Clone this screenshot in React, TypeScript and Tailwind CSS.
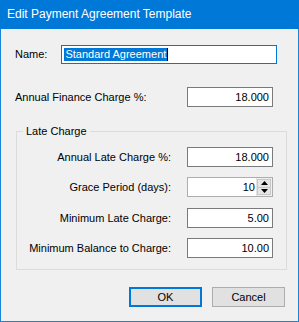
import { ReactNode } from 'react'

// Edit Payment Agreement Template — WinForms style dialog

function Field({ value, className = '' }: { value: string; className?: string }) {
  return (
    <div className={`h-[20px] w-[86px] bg-white border border-[#7a7a7a] flex items-center justify-end pr-[3px] ${className}`}>
      <span>{value}</span>
    </div>
  )
}

function Spinner({ value }: { value: string }) {
  return (
    <div className="h-[20px] w-[86px] bg-white border border-[#adadad] flex items-stretch">
      <div className="flex-1 flex items-center justify-end pr-[1px]">{value}</div>
      <div className="w-[16px] flex flex-col bg-[#f0f0f0] border-l border-[#e3e3e3] py-[1px] pr-[1px]">
        <div className="flex-1 flex items-center justify-center bg-[#e6e6e6] border border-[#c8c8c8]">
          <svg width="7" height="4" viewBox="0 0 7 4"><path d="M3.5 0 L7 4 L0 4 Z" fill="#000" /></svg>
        </div>
        <div className="flex-1 flex items-center justify-center bg-[#e6e6e6] border border-t-0 border-[#c8c8c8]">
          <svg width="7" height="4" viewBox="0 0 7 4"><path d="M0 0 L7 0 L3.5 4 Z" fill="#000" /></svg>
        </div>
      </div>
    </div>
  )
}

function Row({ label, children, className = '' }: { label: string; children: ReactNode; className?: string }) {
  return (
    <div className={`flex items-center ${className}`}>
      <span className="w-[155px] text-right pr-[1px]">{label}</span>
      <div className="ml-[15px]">{children}</div>
    </div>
  )
}

export default function App() {
  return (
    <div
      className="w-[299px] h-[322px] bg-[#f0f0f0] border-x border-b border-[#1883d7] text-[11px] leading-[13px] text-black flex flex-col"
      style={{ fontFamily: '"Liberation Sans", Arial, sans-serif' }}
    >
      <div className="h-[29px] -mx-px bg-[#0078d7] text-white text-[12px] flex items-center pl-[7px] shrink-0">
        Edit Payment Agreement Template
      </div>

      <div className="pl-[14px] pt-[16px]">
        <div className="flex items-center">
          <span>Name:</span>
          <div className="ml-[14px] h-[19px] w-[216px] bg-white border border-[#0078d7] flex items-center pl-[2px]">
            <span className="bg-[#0078d7] text-white leading-[13px] px-[1px] border-r border-black">Standard Agreement</span>
          </div>
        </div>

        <div className="flex items-center mt-[23px]">
          <span className="w-[172px]">Annual Finance Charge %:</span>
          <Field value="18.000" />
        </div>
      </div>

      <div className="relative mt-[24px] ml-[15px] w-[271px] border border-[#dcdcdc] pt-[15px] pb-[11px]">
        <span className="absolute -top-[7px] left-[6px] bg-[#f0f0f0] px-[3px]">Late Charge</span>
        <Row label="Annual Late Charge %:">
          <Field value="18.000" />
        </Row>
        <Row label="Grace Period (days):" className="mt-[10px]">
          <Spinner value="10" />
        </Row>
        <Row label="Minimum Late Charge:" className="mt-[11px]">
          <Field value="5.00" />
        </Row>
        <Row label="Minimum Balance to Charge:" className="mt-[10px]">
          <Field value="10.00" />
        </Row>
      </div>

      <div className="flex justify-end gap-[10px] mt-[17px] pr-[13px]">
        <button className="w-[73px] h-[20px] bg-[#e1e1e1] border-2 border-[#0078d7] flex items-center justify-center">OK</button>
        <button className="w-[73px] h-[20px] bg-[#e1e1e1] border border-[#adadad] flex items-center justify-center">Cancel</button>
      </div>
    </div>
  )
}
